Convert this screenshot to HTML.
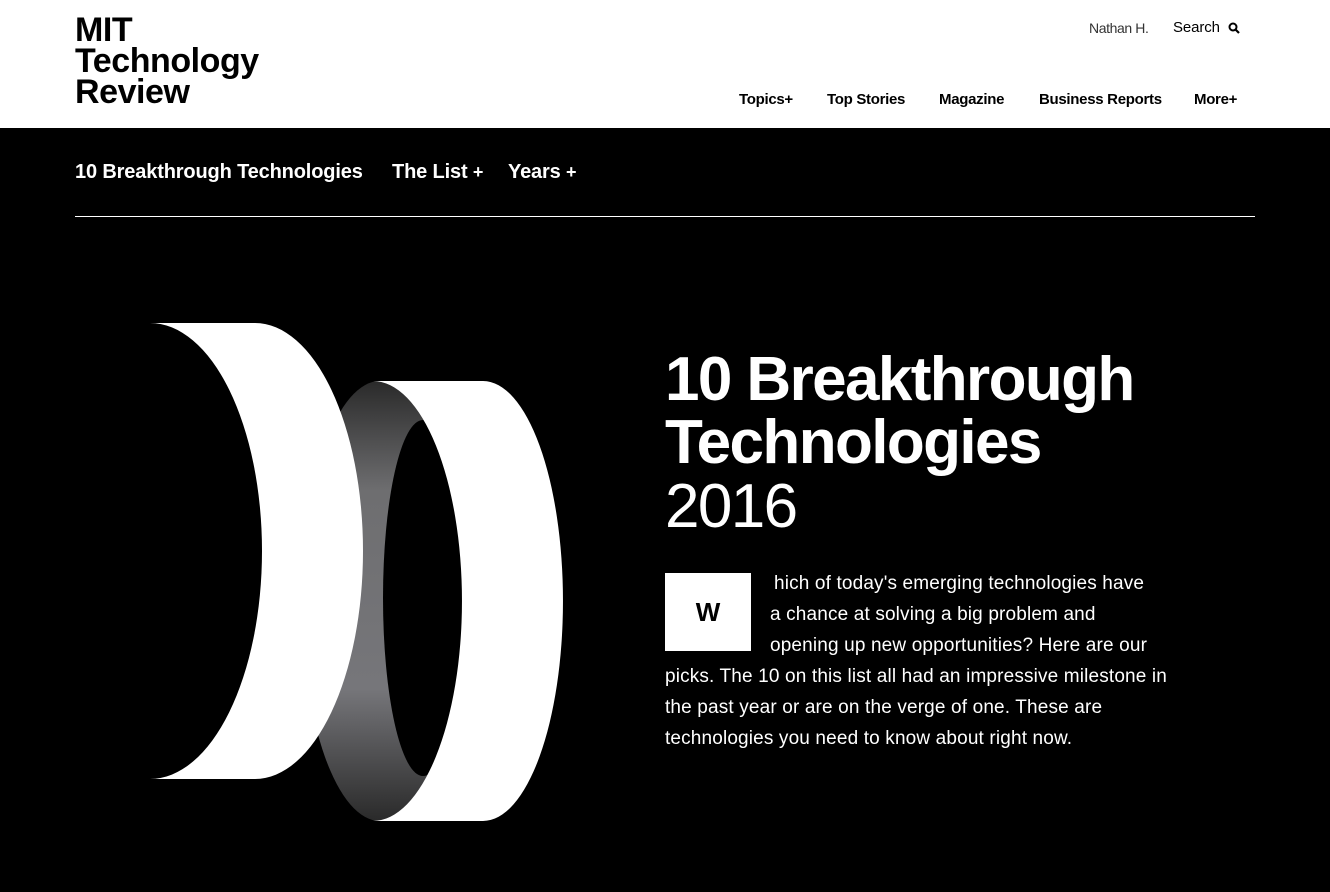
<!DOCTYPE html>
<html><head><meta charset="utf-8"><style>
*{margin:0;padding:0;box-sizing:border-box}
body{width:1330px;height:892px;background:#000;font-family:"Liberation Sans",sans-serif;position:relative;overflow:hidden}
.hdr{position:absolute;left:0;top:0;width:1330px;height:128px;background:#fff}
.a{position:absolute;white-space:nowrap}
.logo{left:75px;top:15px;font-weight:bold;font-size:34px;line-height:31px;letter-spacing:-0.45px;color:#000}
.nav{top:91px;font-weight:bold;font-size:15px;letter-spacing:-0.3px;color:#000}
.sub{top:161px;font-weight:bold;font-size:20px;letter-spacing:-0.15px;color:#fff}
.t{left:665px;font-size:62px;letter-spacing:-1.6px;color:#fff;line-height:64px}
.p{left:665px;font-size:19px;letter-spacing:0.15px;color:#fff;line-height:31px}
</style></head><body>
<div class="hdr"></div>
<div class="a logo">MIT<br>Technology<br>Review</div>
<div class="a" style="left:1089px;top:20px;font-size:14px;letter-spacing:-0.4px;color:#333">Nathan H.</div>
<div class="a" style="left:1173px;top:19px;font-size:15px;letter-spacing:-0.1px;color:#000">Search</div>
<svg class="a" style="left:1228px;top:22px" width="12" height="12" viewBox="0 0 12 12"><circle cx="5" cy="5" r="3.5" fill="none" stroke="#000" stroke-width="2"/><path d="M7.5 7.5L11 11" stroke="#000" stroke-width="2.2"/></svg>
<div class="a nav" style="left:739px">Topics+</div>
<div class="a nav" style="left:827px">Top Stories</div>
<div class="a nav" style="left:939px">Magazine</div>
<div class="a nav" style="left:1039px">Business Reports</div>
<div class="a nav" style="left:1194px">More+</div>
<div class="a sub" style="left:75px">10 Breakthrough Technologies</div>
<div class="a sub" style="left:392px">The List <span style="font-size:18px">+</span></div>
<div class="a sub" style="left:508px">Years <span style="font-size:18px">+</span></div>
<div class="a" style="left:75px;top:216px;width:1180px;height:1px;background:#fff"></div>
<svg class="a" style="left:0;top:0" width="640" height="892">
<defs><linearGradient id="g" x1="0" y1="0" x2="0" y2="1"><stop offset="0" stop-color="#2a2a2a"/><stop offset="0.25" stop-color="#6e6e70"/><stop offset="0.7" stop-color="#76767a"/><stop offset="1" stop-color="#2a2a2a"/></linearGradient></defs>
<ellipse cx="380" cy="601" rx="78" ry="220" fill="url(#g)"/>
<ellipse cx="423" cy="598" rx="40" ry="178" fill="#000"/>
<path d="M373,381 L483,381 A80,220 0 0 1 483,821 L373,821 A89,220 0 0 0 373,381 Z" fill="#fff"/>
<path d="M150,323 L255,323 A108,228 0 0 1 255,779 L150,779 A112,228 0 0 0 150,323 Z" fill="#fff"/>
</svg>
<div class="a t" style="top:348px;font-weight:bold">10 Breakthrough</div>
<div class="a t" style="top:411px;font-weight:bold">Technologies</div>
<div class="a t" style="top:475px">2016</div>
<div class="a" style="left:665px;top:573px;width:86px;height:78px;background:#fff;color:#000;font-weight:bold;font-size:26px;text-align:center;line-height:78px">W</div>
<div class="a p" style="left:774px;top:568px">hich of today's emerging technologies have</div>
<div class="a p" style="left:770px;top:599px">a chance at solving a big problem and</div>
<div class="a p" style="left:770px;top:630px">opening up new opportunities? Here are our</div>
<div class="a p" style="top:661px">picks. The 10 on this list all had an impressive milestone in</div>
<div class="a p" style="top:692px">the past year or are on the verge of one. These are</div>
<div class="a p" style="top:723px">technologies you need to know about right now.</div>
</body></html>
